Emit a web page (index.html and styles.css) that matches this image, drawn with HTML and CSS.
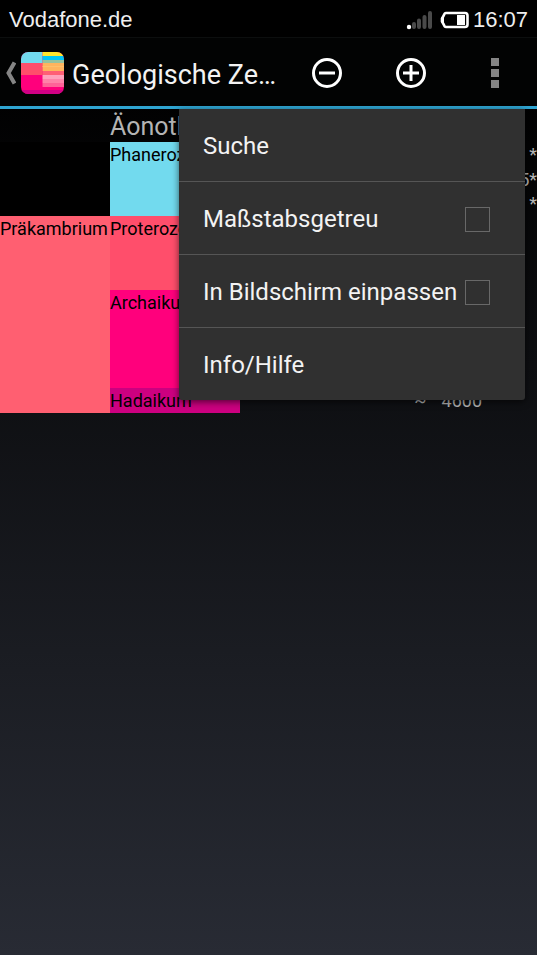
FILE: index.html
```html
<!DOCTYPE html>
<html lang="de">
<head>
<meta charset="utf-8">
<meta name="viewport" content="width=device-width, initial-scale=1">
<title>Geologische Zeitskala</title>
<link rel="stylesheet" href="styles.css">
</head>
<body>
<div class="status-bar">
  <span class="carrier">Vodafone.de</span>
  <svg class="signal" width="26" height="20" viewBox="0 0 26 20" aria-hidden="true">
    <circle cx="3" cy="17" r="2.2" fill="#fff"/>
    <path d="M8 14V17M13 10.500V17M18.500 7V17M24 3V17" stroke="#4a4a4a" stroke-width="4" stroke-linecap="round"/>
  </svg>
  <svg class="battery" width="29" height="18" viewBox="0 0 29 18" aria-hidden="true">
    <path d="M6 2h19q2.500 0 2.500 2.500v9q0 2.500-2.500 2.500H6q-1.500 0-2-2l-2-3.500v-3L4 4q.5-2 2-2z" fill="none" stroke="#fff" stroke-width="2.600"/>
    <path d="M1 7L4 4V14L1 11z" fill="#fff"/>
    <rect x="17" y="4" width="8" height="10" fill="#fff"/>
  </svg>
  <span>16:07</span>
</div>
<header class="app-bar">
  <a class="up" href="#" aria-label="Zurück">
    <svg width="12" height="24" viewBox="0 0 12 24" aria-hidden="true">
      <path d="M10.500 1.500L4.500 12L10.500 22.500" fill="none" stroke="#858585" stroke-width="4"/>
    </svg>
    <svg class="logo" width="43" height="42" viewBox="0 0 42 42" preserveAspectRatio="none" aria-hidden="true">
      <defs><clipPath id="logo-shape"><rect width="42" height="42" rx="7"/></clipPath></defs>
      <g clip-path="url(#logo-shape)">
        <rect width="42" height="42" fill="#ff007c"/>
        <rect width="21" height="11" fill="#72daee"/>
        <rect y="11" width="21" height="12" fill="#ff4e6b"/>
        <rect x="21" width="21" height="4" fill="#ffe62e"/>
        <rect x="21" y="4" width="21" height="4" fill="#00c6f5"/>
        <rect x="21" y="8" width="21" height="3" fill="#96c3a0"/>
        <rect x="21" y="11" width="21" height="8" fill="#ffb45e"/>
        <rect x="21" y="14" width="21" height="1" fill="#ffc06b"/>
        <rect x="21" y="19" width="21" height="4" fill="#ff5f75"/>
        <rect x="21" y="23" width="21" height="4" fill="#ffa2bc"/>
        <rect x="21" y="27" width="21" height="4" fill="#ff82a8"/>
        <rect x="21" y="31" width="21" height="4" fill="#ff6398"/>
        <rect y="38" width="42" height="4" fill="#d10085"/>
      </g>
    </svg>
  </a>
  <h1 class="title">Geologische Ze…</h1>
  <button class="action" type="button" aria-label="Verkleinern">
    <svg width="30" height="30" viewBox="0 0 30 30" fill="none" stroke="#fff" stroke-width="3" aria-hidden="true"><circle cx="15" cy="15" r="13.500"/><path d="M7 15H23"/></svg>
  </button>
  <button class="action" type="button" aria-label="Vergrößern">
    <svg width="30" height="30" viewBox="0 0 30 30" fill="none" stroke="#fff" stroke-width="3" aria-hidden="true"><circle cx="15" cy="15" r="13.500"/><path d="M7 15H23M15 7V23"/></svg>
  </button>
  <button class="action" type="button" aria-label="Weitere Optionen">
    <svg width="8" height="30" viewBox="0 0 8 30" fill="#858585" aria-hidden="true"><path d="M0 0H8V8H0zM0 11H8V19H0zM0 22H8V30H0z"/></svg>
  </button>
  <div class="menu">
    <button class="menu-item" type="button">Suche</button>
    <label class="menu-item">Maßstabsgetreu<input class="tick" type="checkbox"></label>
    <label class="menu-item">In Bildschirm einpassen<input class="tick" type="checkbox"></label>
    <button class="menu-item" type="button">Info/Hilfe</button>
  </div>
</header>
<main>
  <table class="scale">
    <colgroup><col class="col-super"><col class="col-eon"><col><col class="col-mark"></colgroup>
    <thead><tr><th></th><th>Äonothem</th><th></th><th></th></tr></thead>
    <tbody>
      <tr><td class="blank" rowspan="3"></td><td class="phanero" rowspan="3">Phanerozoikum</td><td></td><td class="mark">*</td></tr>
      <tr><td></td><td class="mark">5*</td></tr>
      <tr class="short"><td></td><td class="mark">*</td></tr>
      <tr class="tall"><td class="pre" rowspan="3">Präkambrium</td><td class="protero">Proterozoikum</td><td></td><td></td></tr>
      <tr class="taller"><td class="archa">Archaikum</td><td></td><td></td></tr>
      <tr><td class="hada">Hadaikum</td><td class="age"><span>~</span><span>4600</span></td><td></td></tr>
    </tbody>
  </table>
</main>
</body>
</html>
```
FILE: styles.css
```css
* {
  box-sizing: border-box;
}

body {
  margin: 0;
  min-height: 100vh;
  background: linear-gradient(#000 0, #000 80px, #282b34 100%);
  color: #f3f3f3;
  font-family: Roboto, "Liberation Sans", sans-serif;
}

.status-bar {
  display: flex;
  align-items: center;
  height: 38px;
  padding: 3px 9px 0;
  background: #000;
  border-bottom: 1px solid #0c0e0e;
  color: #eee;
  font-family: "Liberation Sans", sans-serif;
  font-size: 22px;
}

.carrier {
  flex: 1;
}

.signal {
  margin-right: 8px;
}

.battery {
  margin-right: 4px;
}

.app-bar {
  position: relative;
  display: flex;
  align-items: center;
  height: 71px;
  padding: 2px 0 0 4px;
  background: #020303;
  border-bottom: 3px solid #2fa5d2;
}

.up {
  display: flex;
  align-items: center;
  gap: 5px;
}

.logo {
  margin-right: 8px;
}

.title {
  flex: 1;
  margin: 0;
  padding-top: 4px;
  overflow: hidden;
  font-size: 27px;
  font-weight: 400;
  line-height: 36px;
  white-space: nowrap;
}

.action {
  display: flex;
  align-items: center;
  justify-content: center;
  width: 84px;
  height: 66px;
  padding: 0;
  border: 0;
  background: none;
}

.menu {
  position: absolute;
  z-index: 1;
  top: 71px;
  right: 12px;
  width: 346px;
  background: #303030;
  border-radius: 0 0 3px 3px;
  box-shadow: 0 2px 7px rgba(0, 0, 0, 0.6);
}

.menu-item {
  display: flex;
  align-items: center;
  justify-content: space-between;
  width: 100%;
  height: 73px;
  padding: 2px 35px 0 24px;
  border: 0;
  border-bottom: 1px solid #555;
  background: none;
  color: #f3f3f3;
  font: 24px Roboto, sans-serif;
  white-space: nowrap;
}

.menu-item:last-child {
  height: 72px;
  border-bottom: 0;
}

.tick {
  appearance: none;
  flex: none;
  width: 25px;
  height: 25px;
  margin: 0;
  border: 1px solid #686868;
}

.scale {
  width: 100%;
  table-layout: fixed;
  border-collapse: collapse;
  font-size: 18px;
  line-height: 24px;
}

.col-super {
  width: 110px;
}

.col-eon {
  width: 130px;
}

.col-mark {
  width: 50px;
}

.scale th {
  height: 33px;
  padding: 2px 0 0;
  color: #b4b4b4;
  font-size: 25px;
  font-weight: 400;
  line-height: 31px;
  text-align: left;
}

.scale td {
  height: 25px;
  padding: 1px 0 0;
  color: #000;
  vertical-align: top;
  white-space: nowrap;
}

.scale .short td {
  height: 24px;
  padding: 0;
}

.scale .tall td {
  height: 74px;
}

.scale .taller td {
  height: 98px;
}

.scale .blank {
  background: #000;
}

.scale .phanero {
  background: #72daee;
}

.scale .pre {
  background: #ff5f71;
}

.scale .protero {
  background: #ff4e6b;
}

.scale .archa {
  background: #ff007c;
}

.scale .hada {
  background: #cc0080;
}

.scale .mark,
.scale .age {
  color: #b4b4b4;
  text-align: right;
}

.age span {
  margin-right: 5px;
  margin-left: 10px;
}
```
